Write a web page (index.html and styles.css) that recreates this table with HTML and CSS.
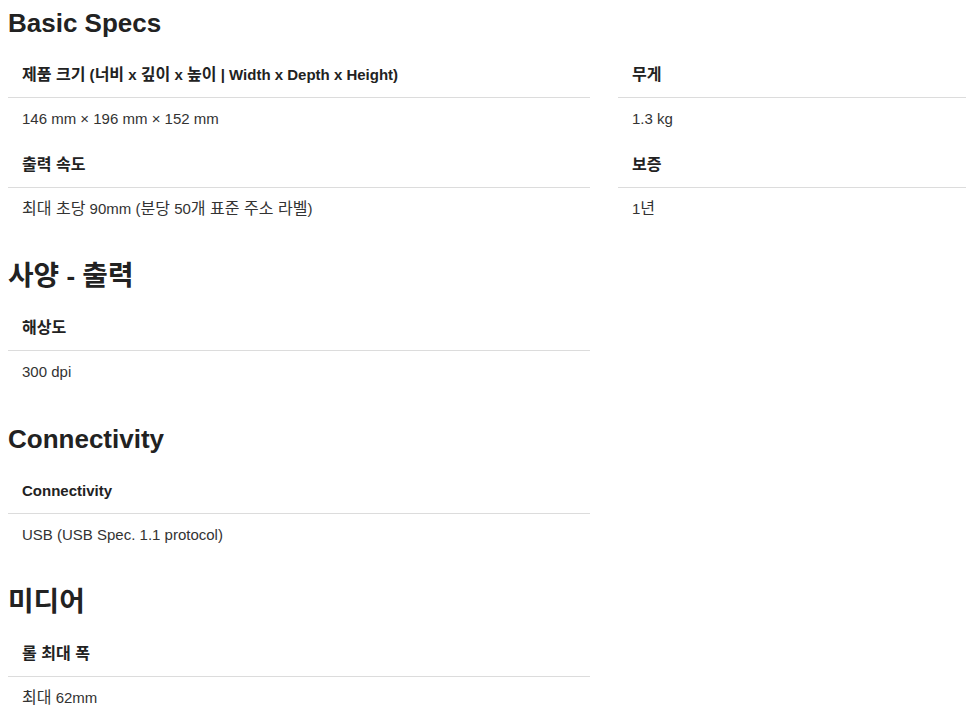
FILE: index.html
```html
<!DOCTYPE html>
<html lang="ko">
<head>
<meta charset="utf-8">
<title>Specs</title>
<link rel="stylesheet" href="styles.css">
</head>
<body>
<div class="specs">
  <section class="section">
    <h2 class="section-title">Basic Specs</h2>
    <div class="grid">
      <div class="spec">
        <div class="spec-label"><span class="ko">제품 크기</span> (<span class="ko">너비</span> x <span class="ko">깊이</span> x <span class="ko">높이</span> | Width x Depth x Height)</div>
        <div class="spec-value">146 mm × 196 mm × 152 mm</div>
      </div>
      <div class="spec">
        <div class="spec-label"><span class="ko">무게</span></div>
        <div class="spec-value">1.3 kg</div>
      </div>
      <div class="spec">
        <div class="spec-label"><span class="ko">출력 속도</span></div>
        <div class="spec-value"><span class="ko">최대 초당</span> 90mm (<span class="ko">분당</span> 50<span class="ko">개 표준 주소 라벨</span>)</div>
      </div>
      <div class="spec">
        <div class="spec-label"><span class="ko">보증</span></div>
        <div class="spec-value">1<span class="ko">년</span></div>
      </div>
    </div>
  </section>
  <section class="section">
    <h2 class="section-title"><span class="ko">사양</span> - <span class="ko">출력</span></h2>
    <div class="grid">
      <div class="spec">
        <div class="spec-label"><span class="ko">해상도</span></div>
        <div class="spec-value">300 dpi</div>
      </div>
    </div>
  </section>
  <section class="section">
    <h2 class="section-title">Connectivity</h2>
    <div class="grid">
      <div class="spec">
        <div class="spec-label">Connectivity</div>
        <div class="spec-value">USB (USB Spec. 1.1 protocol)</div>
      </div>
    </div>
  </section>
  <section class="section">
    <h2 class="section-title"><span class="ko">미디어</span></h2>
    <div class="grid">
      <div class="spec">
        <div class="spec-label"><span class="ko">롤 최대 폭</span></div>
        <div class="spec-value"><span class="ko">최대</span> 62mm</div>
      </div>
    </div>
  </section>
</div>
</body>
</html>
```
FILE: styles.css
```css
html, body {
  background: #fff;
}
body {
  margin: 0;
  padding: 8px 0 0 8px;
  font-family: "Liberation Sans", Arial, "Noto Sans CJK KR", sans-serif;
  font-size: 15px;
  color: #333;
}
.specs {
  width: 958px;
}
.section + .section {
  margin-top: 29px;
}
.section-title {
  margin: 0 0 14px;
  font-size: 26px;
  line-height: 30px;
  font-weight: bold;
  color: #222;
}
.ko {
  font-size: 1.07em;
  line-height: 1;
}
.grid {
  display: grid;
  grid-template-columns: 582px 348px;
  column-gap: 28px;
}
.spec-label {
  padding: 13px 14px 12px;
  line-height: 20px;
  font-weight: bold;
  color: #222;
  border-bottom: 1px solid #dcdcdc;
}
.spec-value {
  padding: 11px 14px 13px;
  line-height: 20px;
  color: #333;
}
```
